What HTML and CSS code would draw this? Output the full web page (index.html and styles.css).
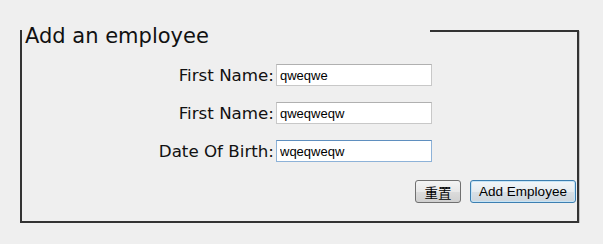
FILE: index.html
```html
<!DOCTYPE html>
<html lang="en">
<head>
    <meta charset="UTF-8">
    <title>Add an employee</title>
    <link rel="stylesheet" href="styles.css">
</head>
<body>
<form class="employee-form">
    <fieldset>
        <legend>Add an employee</legend>
        <div class="fields">
            <label for="first-name">First Name:</label>
            <input type="text" id="first-name" name="firstName" value="qweqwe">

            <label for="last-name">First Name:</label>
            <input type="text" id="last-name" name="lastName" value="qweqweqw">

            <label for="dob">Date Of Birth:</label>
            <input type="text" id="dob" name="dob" value="wqeqweqw" class="focused">
        </div>
        <div class="actions">
            <button type="reset">重置</button>
            <button type="submit" class="primary">Add Employee</button>
        </div>
    </fieldset>
</form>
</body>
</html>
```

FILE: styles.css
```css
body {
    margin: 0;
    background-color: #efefef;
    font-family: "DejaVu Sans", Verdana, sans-serif;
    color: #111;
}

.employee-form {
    padding: 14px 0 0 20px;
}

fieldset {
    width: 559px;
    box-sizing: border-box;
    margin: 0;
    padding: 0 0 18px 0;
    border: 2px solid #333;
    box-shadow: 1px 1px 0 #c4c4c4;
}

legend {
    width: 405px;
    padding: 10px 0 0 3px;
    margin: 0;
    font-size: 21px;
    line-height: 24px;
    color: #111;
}

.fields {
    display: grid;
    grid-template-columns: 252px 156px;
    column-gap: 2px;
    row-gap: 16px;
    align-items: center;
    margin-top: 16px;
}

.fields label {
    text-align: right;
    font-size: 16.7px;
    line-height: 19px;
}

.fields input {
    box-sizing: border-box;
    height: 22px;
    width: 156px;
    margin: 0;
    padding: 0 3px;
    border: 1px solid #c8c8c8;
    border-top-color: #b0b0b0;
    background: #fff;
    font-family: "Liberation Sans", Arial, sans-serif;
    font-size: 13px;
    color: #000;
    outline: none;
}

.fields input.focused {
    border-color: #8db2d8;
    border-top-color: #5f8fbf;
}

.actions {
    display: flex;
    justify-content: flex-end;
    align-items: center;
    gap: 9px;
    margin-top: 17px;
    padding-right: 1px;
}

.actions button {
    box-sizing: border-box;
    height: 23px;
    margin: 0;
    padding: 0 6px;
    border: 1px solid #707070;
    border-radius: 3px;
    background: linear-gradient(#f4f4f4, #e8e8e8 50%, #dcdcdc 51%, #d0d0d0);
    font-family: "Liberation Sans", Arial, "Noto Sans CJK SC", sans-serif;
    font-size: 13.5px;
    color: #000;
}

.actions button[type="reset"] {
    width: 46px;
    margin-top: 1px;
}

.actions button.primary {
    width: 106px;
    border-color: #3c7fb1;
    box-shadow: inset 0 0 0 1px #c6e4f6;
    background: linear-gradient(#f2f6f9, #e6ecf0 50%, #d8e0e6 51%, #cdd6dd);
}
```
